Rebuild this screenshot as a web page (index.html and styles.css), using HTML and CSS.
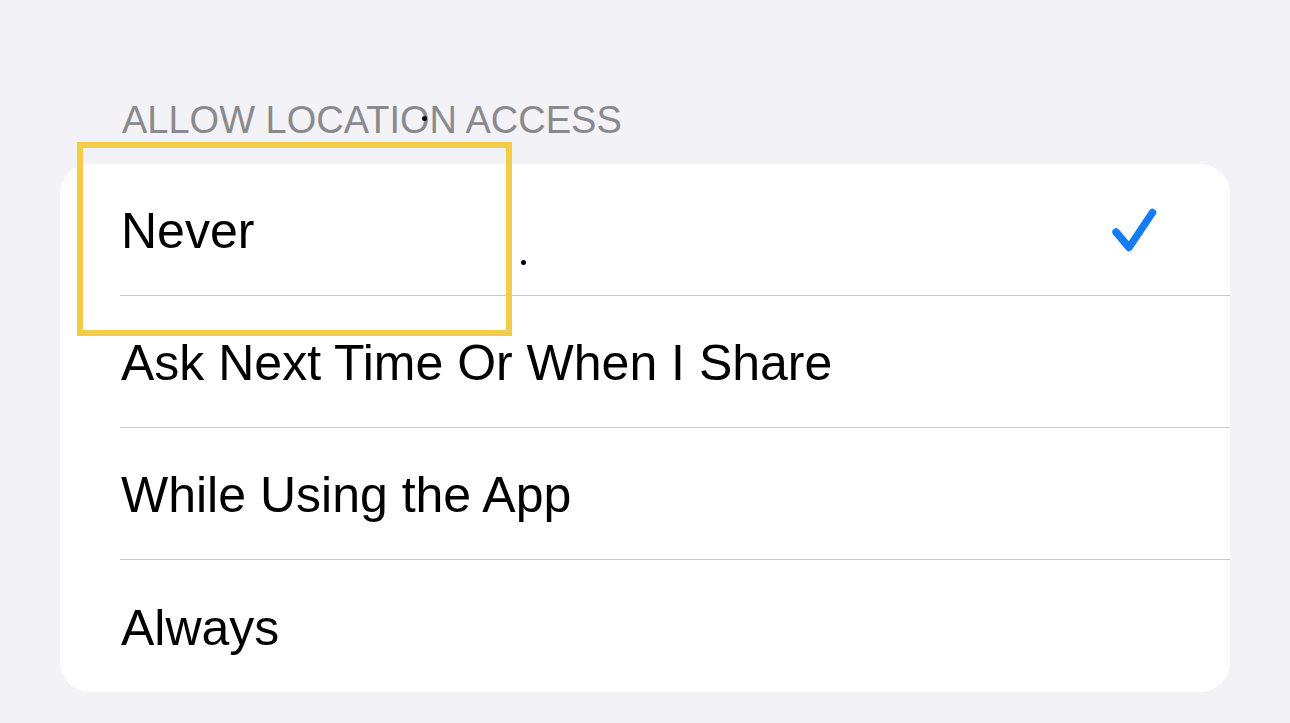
FILE: index.html
```html
<!DOCTYPE html>
<html lang="en">
<head>
<meta charset="utf-8">
<title>Allow Location Access</title>
<link rel="stylesheet" href="styles.css">
</head>
<body>
<div class="page">
  <div class="section-header">ALLOW LOCATION ACCESS</div>
  <div class="card">
    <div class="row">
      <div class="row-inner">
        <span class="label">Never</span>
        <svg class="check" width="52" height="52" viewBox="0 0 52 52" aria-hidden="true">
          <path d="M8 28 L21 43.5 L44.5 8.5" fill="none" stroke="#167cf6" stroke-width="7.5" stroke-linecap="round" stroke-linejoin="round"/>
        </svg>
      </div>
    </div>
    <div class="row">
      <div class="row-inner"><span class="label">Ask Next Time Or When I Share</span></div>
    </div>
    <div class="row">
      <div class="row-inner"><span class="label">While Using the App</span></div>
    </div>
    <div class="row">
      <div class="row-inner last"><span class="label">Always</span></div>
    </div>
  </div>
  <div class="highlight"></div>
  <div class="dot dot-a"></div>
  <div class="dot dot-b"></div>
</div>
</body>
</html>
```
FILE: styles.css
```css
html, body {
  margin: 0;
  padding: 0;
  background: #f2f2f7;
}
body {
  width: 1290px;
  height: 723px;
  overflow: hidden;
  font-family: "Liberation Sans", Arial, sans-serif;
}
.page {
  position: relative;
  padding: 100px 60px 0 60px;
}
.section-header {
  padding-left: 62px;
  font-size: 38px;
  line-height: 40px;
  height: 40px;
  color: #8a8a8e;
}
.card {
  margin-top: 24px;
  width: 1170px;
  background: #ffffff;
  border-radius: 30px;
  overflow: hidden;
}
.row {
  padding-left: 60px;
}
.row-inner {
  display: flex;
  align-items: center;
  justify-content: space-between;
  box-sizing: border-box;
  height: 132px;
  padding: 3px 70px 0 1px;
  border-bottom: 1px solid #c8c8cb;
}
.row-inner.last {
  border-bottom: none;
}
.label {
  font-size: 50px;
  line-height: 50px;
  color: #000000;
}
.check {
  display: block;
  margin-top: -3px;
}
.highlight {
  position: absolute;
  left: 77px;
  top: 142px;
  width: 435px;
  height: 194px;
  box-sizing: border-box;
  border: 6px solid #f6cb47;
}
.dot {
  position: absolute;
  width: 5px;
  height: 5px;
  border-radius: 50%;
  background: #000000;
}
.dot-a {
  left: 422px;
  top: 116px;
}
.dot-b {
  left: 521px;
  top: 260px;
}
```
